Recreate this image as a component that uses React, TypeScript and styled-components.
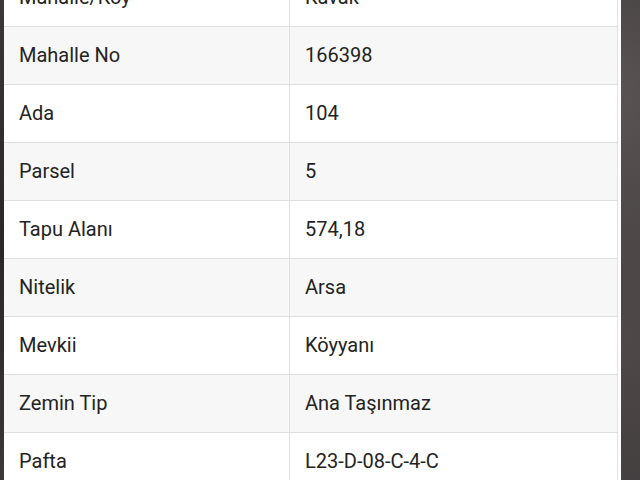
import React from "react";
import styled, { createGlobalStyle } from "styled-components";

const Global = createGlobalStyle`
  html, body { margin: 0; padding: 0; }
  body {
    width: 640px;
    height: 480px;
    overflow: hidden;
    background: #3b3637;
    font-family: Roboto, "Noto Sans", "Liberation Sans", sans-serif;
  }
`;

const Backdrop = styled.div`
  width: 640px;
  height: 480px;
  overflow: hidden;
  background:
    radial-gradient(circle at 95% 20%, #5a5455 0%, transparent 30%),
    radial-gradient(circle at 98% 70%, #4e4849 0%, transparent 35%),
    radial-gradient(circle at 0% 50%, #2a2526 0%, transparent 40%),
    #3d3839;
`;

const Panel = styled.div`
  margin: -32px 19px 0 4px;
  background: #ffffff;
  padding-right: 3px;
`;

const Table = styled.table`
  width: 100%;
  border-collapse: collapse;
  border-right: 1px solid #e2e2e2;
`;

const Row = styled.tr<{ $shaded: boolean }>`
  height: 58px;
  background: ${(p) => (p.$shaded ? "#f7f7f7" : "#ffffff")};
  border-bottom: 1px solid #dedede;
`;

const Cell = styled.td<{ $label?: boolean }>`
  padding: 0 15px;
  font-size: 20px;
  color: #232323;
  vertical-align: middle;
  width: ${(p) => (p.$label ? "255px" : "auto")};
  border-right: ${(p) => (p.$label ? "1px solid #e0e0e0" : "none")};
`;

const rows: [string, string][] = [
  ["Mahalle/Köy", "Kavak"],
  ["Mahalle No", "166398"],
  ["Ada", "104"],
  ["Parsel", "5"],
  ["Tapu Alanı", "574,18"],
  ["Nitelik", "Arsa"],
  ["Mevkii", "Köyyanı"],
  ["Zemin Tip", "Ana Taşınmaz"],
  ["Pafta", "L23-D-08-C-4-C"],
];

export default function App() {
  return (
    <Backdrop>
      <Global />
      <Panel>
        <Table>
          <tbody>
            {rows.map(([k, v], i) => (
              <Row key={k} $shaded={i % 2 === 1}>
                <Cell $label>{k}</Cell>
                <Cell>{v}</Cell>
              </Row>
            ))}
          </tbody>
        </Table>
      </Panel>
    </Backdrop>
  );
}
